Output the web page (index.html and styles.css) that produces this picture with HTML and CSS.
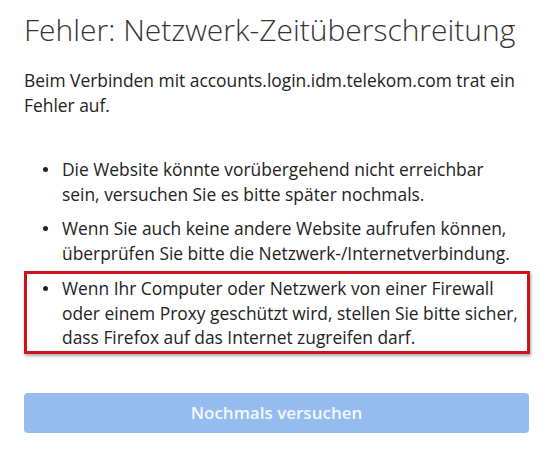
FILE: index.html
```html
<!DOCTYPE html>
<html lang="de">
<head>
    <meta charset="UTF-8">
    <meta name="viewport" content="width=device-width, initial-scale=1.0">
    <title>Fehler: Netzwerk-Zeitüberschreitung</title>
    <link rel="stylesheet" href="styles.css">
</head>
<body>

    <div class="error-page">
        <h1 class="title">Fehler: Netzwerk-Zeitüberschreitung</h1>

        <p class="intro">Beim Verbinden mit accounts.login.idm.telekom.com trat ein Fehler auf.</p>

        <!-- Hinweise -->
        <ul class="hints">
            <li><span class="dot"></span><span>Die Website könnte vorübergehend nicht erreichbar<br>sein, versuchen Sie es bitte später nochmals.</span></li>
            <li><span class="dot"></span><span>Wenn Sie auch keine andere Website aufrufen können, überprüfen Sie bitte die Netzwerk-/Internetverbindung.</span></li>
            <li class="marked"><span class="dot"></span><span>Wenn Ihr Computer oder Netzwerk von einer Firewall oder einem Proxy geschützt wird, stellen Sie bitte sicher, dass Firefox auf das Internet zugreifen darf.</span></li>
        </ul>

        <button class="retry">Nochmals versuchen</button>
    </div>

</body>
</html>
```

FILE: styles.css
```css
body {
    margin: 0;
    background-color: #fff;
    font-family: "Open Sans", "Noto Sans", sans-serif;
    color: #222;
}

.error-page {
    width: 506px;
    padding: 10px 0 0 24px;
}

.title {
    margin: 0;
    font-size: 30px;
    font-weight: 300;
    line-height: 40px;
    color: #333;
    white-space: nowrap;
}

.intro {
    margin: 18px 0 0;
    font-size: 17.4px;
    line-height: 24.5px;
}

.hints {
    list-style: none;
    margin: 40px 0 0;
    padding: 0 4px 0 0;
    font-size: 17.4px;
    line-height: 24.5px;
}

.hints li {
    display: grid;
    grid-template-columns: 38px 1fr;
    margin-bottom: 10px;
}

.dot {
    width: 5px;
    height: 5px;
    margin: 10px 0 0 19px;
    border-radius: 50%;
    background-color: #222;
}

.hints li.marked {
    grid-template-columns: 35px 1fr;
    margin: -4px -4px 0 0;
    padding: 2px 0 1px;
    border: 3px solid #d0101c;
    box-shadow: 1px 2px 3px rgba(0, 0, 0, 0.35);
}

.marked .dot {
    margin-left: 16px;
}

.retry {
    display: block;
    width: 505px;
    height: 40px;
    margin-top: 39px;
    border: none;
    border-radius: 4px;
    background-color: #95bcef;
    color: #f2f7ff;
    font-family: inherit;
    font-size: 17px;
    font-weight: 600;
}
```
